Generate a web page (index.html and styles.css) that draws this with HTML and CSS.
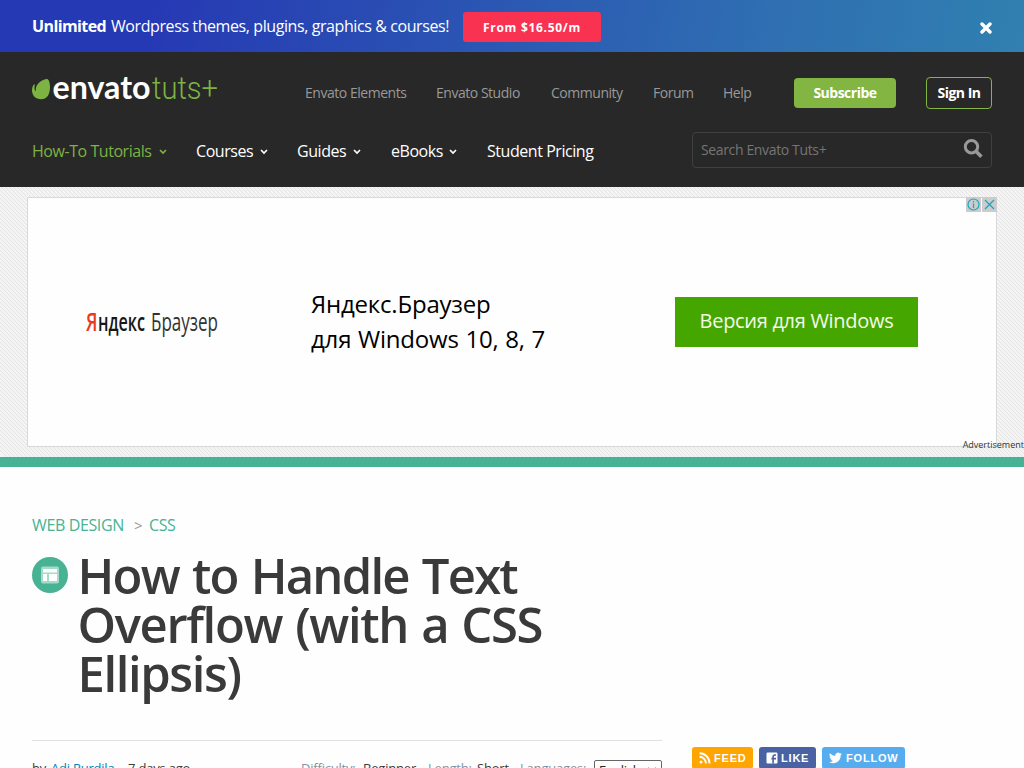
FILE: index.html
```html
<!DOCTYPE html>
<html lang="en">
<head>
<meta charset="utf-8">
<title>How to Handle Text Overflow (with a CSS Ellipsis)</title>
<link rel="stylesheet" href="styles.css">
</head>
<body>
<div class="banner">
  <p class="banner-text"><b>Unlimited</b><span>Wordpress themes, plugins, graphics &amp; courses!</span></p>
  <a class="banner-cta">From $16.50/m</a>
  <svg class="banner-close" width="12" height="12" viewBox="0 0 12 12"><path d="M2 2l8 8M10 2l-8 8" stroke="#fff" stroke-width="3.4" stroke-linecap="round"/></svg>
</div>
<header class="header">
  <div class="header-top">
    <svg class="logo" width="188" height="32" viewBox="0 0 188 32">
      <path d="M14.2 3C16 2.4 17.9 4.8 18 10.5C18.2 18.5 15 23.3 9 23.3C4 23.2 0.2 20.3 0 14.6C0 11.6 1.2 8.4 2.4 8.2C3.2 8.3 2.2 11 2.7 13.6C3 15 3.8 15.6 3.8 14.6C3.4 9.5 7.4 4.4 14.2 3Z" fill="#7cb342"/>
      <text class="logo-main" x="20.5" y="23" textLength="98" lengthAdjust="spacingAndGlyphs">envato</text>
      <text class="logo-sub" x="120" y="23" textLength="66" lengthAdjust="spacingAndGlyphs">tuts+</text>
    </svg>
    <nav class="top-nav">
      <a class="w-elements">Envato Elements</a><a class="w-studio">Envato Studio</a><a class="w-community">Community</a><a class="w-forum">Forum</a><a class="w-help">Help</a>
    </nav>
    <a class="subscribe">Subscribe</a>
    <a class="signin">Sign In</a>
  </div>
  <div class="header-main">
    <nav class="main-nav">
      <a class="active w-tutorials">How-To Tutorials <svg width="8" height="6" viewBox="0 0 8 6"><path d="M1 1l3 3 3-3"/></svg></a>
      <a class="w-courses">Courses <svg width="8" height="6" viewBox="0 0 8 6"><path d="M1 1l3 3 3-3"/></svg></a>
      <a class="w-guides">Guides <svg width="8" height="6" viewBox="0 0 8 6"><path d="M1 1l3 3 3-3"/></svg></a>
      <a class="w-ebooks">eBooks <svg width="8" height="6" viewBox="0 0 8 6"><path d="M1 1l3 3 3-3"/></svg></a>
      <a>Student Pricing</a>
    </nav>
    <div class="search"><span>Search Envato Tuts+</span>
      <svg width="20" height="20" viewBox="0 0 20 20" fill="none" stroke="#999"><circle cx="8.5" cy="7.8" r="6.2" stroke-width="3"/><path d="M13 12.3l5.4 5.4" stroke-width="3.6"/></svg>
    </div>
  </div>
</header>
<section class="ad-strip">
  <div class="ad">
    <svg class="ad-logo" width="134" height="40" viewBox="0 0 134 40">
      <text x="0" y="27" textLength="11.5" lengthAdjust="spacingAndGlyphs" fill="#ea3b21" font-weight="600">Я</text>
      <text x="12" y="27" font-weight="600" textLength="47" lengthAdjust="spacingAndGlyphs" fill="#171717">ндекс</text>
      <text x="65" y="27" textLength="67" lengthAdjust="spacingAndGlyphs" fill="#333">Браузер</text>
    </svg>
    <p class="ad-copy"><span>Яндекс.Браузер</span><br><span class="ad-line">для Windows 10, 8, 7</span></p>
    <a class="ad-button">Версия для Windows</a>
    <div class="ad-choices">
      <svg width="15" height="15" viewBox="0 0 15 15"><circle cx="7.5" cy="7.5" r="5.5"/><path d="M7.5 6.5v4.5M7.5 4v1.4"/></svg>
      <svg width="15" height="15" viewBox="0 0 15 15"><path d="M3 3l9 9M12 3l-9 9"/></svg>
    </div>
  </div>
  <span class="ad-label">Advertisement</span>
</section>
<main class="page">
  <article class="article">
    <div class="crumbs"><a class="crumb-cat">WEB DESIGN</a><span>&gt;</span><a class="crumb-sub">CSS</a></div>
    <div class="heading">
      <span class="category-icon"><svg width="18" height="18" viewBox="0 0 18 18"><rect width="18" height="17" y=".5" rx="2" fill="#a5dbc9"/><path d="M2 3h14v3.5H2zM2 8h4v7H2zM8 8h8v7H8z" fill="#fff"/></svg></span>
      <h1><span class="t1">How to Handle Text</span><br><span class="t2">Overflow (with a CSS</span><br><span class="t3">Ellipsis)</span></h1>
    </div>
    <div class="meta">
      <span class="m-by">by</span><a class="m-author">Adi Purdila</a><span class="m-date">7 days ago</span>
      <span class="m-diff muted">Difficulty:</span><span class="m-beg">Beginner</span><span class="m-len muted">Length:</span><span class="m-short">Short</span><span class="m-lang muted">Languages:</span>
      <span class="select">English<svg width="10" height="6" viewBox="0 0 10 6"><path d="M1 1l4 4 4-4" fill="none" stroke="#222" stroke-width="1.6"/></svg></span>
    </div>
  </article>
  <aside class="share">
    <a class="feed"><svg width="12" height="12" viewBox="0 0 12 12" fill="none" stroke="#fff" stroke-width="1.9"><circle cx="2" cy="10" r="1.5" fill="#fff" stroke="none"/><path d="M.5 4.8a6.5 6.5 0 0 1 6.4 6.7M.5 1.2a10 10 0 0 1 10 10.3"/></svg><span>FEED</span></a>
    <a class="like"><svg width="12" height="12" viewBox="0 0 12 12"><rect width="11" height="11" x=".5" y=".5" rx="1.2" fill="#fff"/><path d="M10 3H9C7.6 3 7.1 3.7 7.1 5V11.5M5.4 6.6H10" fill="none" stroke="#4862a3" stroke-width="1.6"/></svg><span>LIKE</span></a>
    <a class="follow"><svg width="13" height="12" viewBox="0 0 24 20"><path d="M24 2.4a10 10 0 0 1-2.8.8A5 5 0 0 0 23.3.5a10 10 0 0 1-3.1 1.2 4.9 4.9 0 0 0-8.4 4.5A14 14 0 0 1 1.7 1a4.9 4.9 0 0 0 1.5 6.6 5 5 0 0 1-2.2-.6 4.9 4.9 0 0 0 3.9 4.9 5 5 0 0 1-2.2.1 4.9 4.9 0 0 0 4.6 3.4A10 10 0 0 1 0 17.4 14 14 0 0 0 21.5 5 10 10 0 0 0 24 2.4z" fill="#fff"/></svg><span>FOLLOW</span></a>
  </aside>
</main>
</body>
</html>
```
FILE: styles.css
```css
* { box-sizing: border-box; }
body {
  margin: 0;
  width: 1024px;
  height: 768px;
  overflow: hidden;
  background: #fefefe;
  color: #3a3a3a;
  font-family: "Open Sans", "Noto Sans", sans-serif;
  font-size: 14px;
}
p, h1 { margin: 0; }
svg { display: block; flex: none; }
a, span, b { white-space: nowrap; }

.banner {
  display: flex;
  align-items: center;
  height: 52px;
  padding: 0 32px;
  background: linear-gradient(100deg, #2639b4 15%, #2f6fb2 75%, #3080b0);
  color: #fff;
}
.banner-text { display: flex; width: 431px; font-size: 16px; letter-spacing: -.41px; }
.banner-text b { width: 79px; letter-spacing: -.6px; }
.banner-cta {
  width: 138px;
  height: 30px;
  border-radius: 3px;
  background: #fa3251;
  font-size: 12px;
  font-weight: 700;
  line-height: 31px;
  letter-spacing: .7px;
  text-align: center;
  margin-top: 1px;
}
.banner-close { margin: 4px 0 0 auto; }

.header { height: 135px; padding: 22px 32px 0; background: #282828; }
.header-top { display: flex; height: 58px; }
.logo { width: 188px; margin-right: 85px; overflow: visible; margin-top: 2px; }
.logo-main { font: 700 32px Lato, sans-serif; fill: #fff; }
.logo-sub { font: 300 31px Roboto, sans-serif; fill: #7cb342; }
.top-nav { display: flex; width: 489px; padding-top: 9px; color: #999; line-height: 20px; letter-spacing: -.47px; }
.w-elements { width: 131px; }
.w-studio { width: 115px; }
.w-community { width: 102px; }
.w-forum { width: 70px; }
.subscribe, .signin {
  border-radius: 4px;
  color: #fff;
  font-weight: 700;
  letter-spacing: -.5px;
  text-align: center;
}
.subscribe { width: 102px; height: 30px; margin: 4px 30px 0 0; background: #82b541; line-height: 30px; }
.signin { width: 66px; height: 32px; margin-top: 3px; border: 1px solid #82b541; line-height: 30px; }
.header-main { display: flex; justify-content: space-between; }
.main-nav { display: flex; padding-top: 7px; color: #fff; font-size: 16px; line-height: 24px; letter-spacing: -.45px; }
.main-nav a { display: flex; }
.main-nav svg { margin: 10px 0 0 auto; fill: none; stroke: currentColor; stroke-width: 1.7; }
.main-nav .active { color: #7cb342; }
.main-nav .w-tutorials { width: 135px; margin-right: 29px; }
.main-nav .w-courses { width: 72px; margin-right: 29px; }
.main-nav .w-guides { width: 64px; margin-right: 30px; }
.main-nav .w-ebooks { width: 66px; margin-right: 30px; }
.search {
  display: flex;
  justify-content: space-between;
  width: 300px;
  height: 36px;
  padding: 5px 8px;
  border: 1px solid #404040;
  border-radius: 4px;
  color: #757575;
  line-height: 23px;
  letter-spacing: -.36px;
}
.search svg { margin-top: 1px; }

.ad-strip {
  position: relative;
  height: 280px;
  padding: 10px 27px 0;
  border-bottom: 10px solid #48b294;
  background: repeating-linear-gradient(45deg, #f4f4f4 0 1.42px, #e4e4e4 1.42px 2.12px, #f4f4f4 2.12px 2.83px);
}
.ad {
  position: relative;
  display: flex;
  height: 250px;
  padding-left: 58px;
  border: 1px solid #d9d9d9;
  background: #fefefe;
}
.ad-logo { margin: 106px 91px 0 0; font-family: "Open Sans", sans-serif; font-size: 25px; }
.ad-copy { width: 364px; padding-top: 88px; color: #000; font-size: 24px; line-height: 35px; letter-spacing: -.2px; }
.ad-line { letter-spacing: -.2px; word-spacing: .7px; }
.ad-button {
  width: 243px;
  height: 50px;
  margin-top: 99px;
  background: #46a600;
  color: #f4fae9;
  font-size: 20px;
  line-height: 48px;
  letter-spacing: -.3px;
  text-align: center;
}
.ad-choices { position: absolute; top: -1px; right: -1px; display: flex; gap: 1px; }
.ad-choices svg { background: #ccc; fill: none; stroke: #10a9c4; stroke-width: 1.2; }
.ad-label { position: absolute; right: 0; bottom: 5px; color: #333; font-size: 9px; line-height: 14px; }

.page { display: flex; padding: 0 32px; }
.article { width: 630px; margin-right: 30px; }
.crumbs { display: flex; padding-top: 46px; color: #999; font-size: 15px; line-height: 24px; }
.crumbs a { color: #48b294; font-size: 16px; letter-spacing: -.37px; }
.crumb-cat { width: 102px; }
.crumbs span { width: 15px; }
.heading { display: flex; height: 203px; padding-top: 16px; }
.category-icon {
  display: flex;
  align-items: center;
  justify-content: center;
  flex: none;
  width: 36px;
  height: 36px;
  margin: 4px 9.5px 0 0;
  border-radius: 50%;
  background: #48b294;
}
h1 { margin-top: -2px; font-size: 49px; font-weight: 600; line-height: 49px; }
.t1 { letter-spacing: -1.8px; word-spacing: 2.2px; }
.t2 { letter-spacing: -1.35px; word-spacing: 1.7px; }
.t3 { letter-spacing: -1.4px; }
.meta {
  display: flex;
  height: 60px;
  padding-top: 18px;
  border-top: 1px solid #e1e1e1;
  font-size: 13px;
  line-height: 18px;
  letter-spacing: -.2px;
}
.m-by { width: 19px; }
.m-author { width: 77px; color: #0085b6; }
.m-date { width: 173px; }
.m-diff { width: 62px; }
.m-beg { width: 65px; }
.m-len { width: 49px; }
.m-short { width: 43px; }
.m-lang { width: 74px; }
.muted { color: #8193a0; }
.select {
  display: flex;
  align-items: center;
  justify-content: space-between;
  width: 68px;
  height: 20px;
  margin-top: 1px;
  padding: 0 4px;
  border: 1px solid #666;
  border-radius: 2px;
  color: #222;
}
.share { display: flex; gap: 6px; padding-top: 280px; }
.share a {
  display: flex;
  align-items: center;
  gap: 4px;
  height: 22px;
  padding-left: 7px;
  border-radius: 3px;
  color: #fff;
  font: 700 11px "Liberation Sans", sans-serif;
  letter-spacing: .8px;
}
.share .feed { width: 61px; background: #ffa500; }
.share .like { width: 57px; background: #4862a3; }
.share .follow { width: 83px; background: #55acee; }
.share .feed, .share .like { gap: 3px; }
```
